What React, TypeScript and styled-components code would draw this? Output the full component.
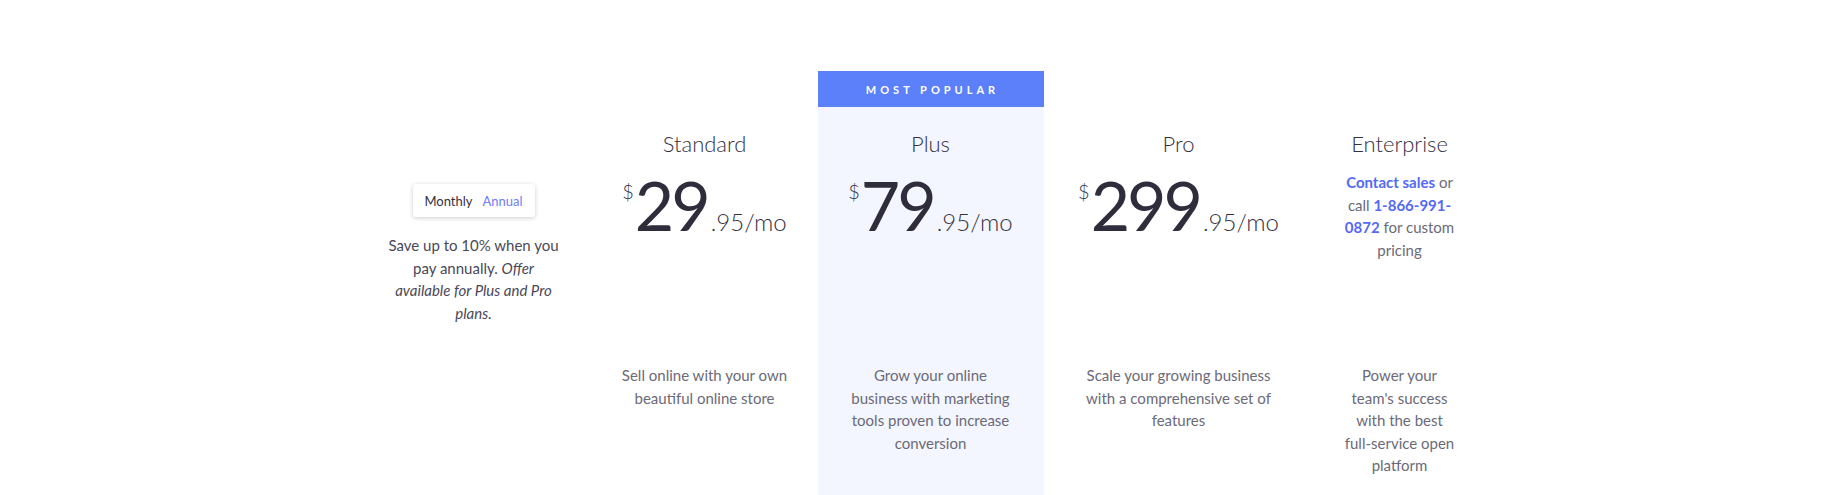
import { styled, createGlobalStyle } from "styled-components";

interface iPlan {
  name: string;
  whole?: string;
  cents?: string;
  blurb: string;
  featured?: boolean;
  contact?: boolean;
}

const plans: iPlan[] = [
  {
    name: "Standard",
    whole: "29",
    cents: ".95",
    blurb: "Sell online with your own beautiful online store",
  },
  {
    name: "Plus",
    whole: "79",
    cents: ".95",
    blurb: "Grow your online business with marketing tools proven to increase conversion",
    featured: true,
  },
  {
    name: "Pro",
    whole: "299",
    cents: ".95",
    blurb: "Scale your growing business with a comprehensive set of features",
  },
  {
    name: "Enterprise",
    blurb: "Power your team's success with the best full-service open platform",
    contact: true,
  },
];

const GlobalStyle = createGlobalStyle`
  html, body {
    margin: 0;
    padding: 0;
    background: #fff;
    overflow: hidden;
  }
  body {
    font-family: Lato, "Open Sans", sans-serif;
    color: #2f2c3b;
  }
`;

const App = () => {
  return (
    <>
      <GlobalStyle />
      <Page>
        <Table>
          <LeftColumn>
            <Toggle>
              <ToggleOption>Monthly</ToggleOption>
              <ToggleOption $active>Annual</ToggleOption>
            </Toggle>
            <SaveNote>
              Save up to 10% when you pay annually.{" "}
              <em>Offer available for Plus and Pro plans.</em>
            </SaveNote>
          </LeftColumn>

          {plans.map((plan) => (
            <Column key={plan.name} $wide={plan.name === "Pro"} $narrow={plan.contact}>
              {plan.featured ? <Badge>Most Popular</Badge> : <BadgeSlot />}
              <Body $featured={plan.featured}>
                <Title>{plan.name}</Title>
                <PriceArea>
                  {plan.contact ? (
                    <Contact>
                      <Link>Contact sales</Link> or call <Link>1-866-991-0872</Link> for custom pricing
                    </Contact>
                  ) : (
                    <Price>
                      <Dollar>$</Dollar>
                      <Whole>{plan.whole}</Whole>
                      <Cents>
                        {plan.cents}/mo
                      </Cents>
                    </Price>
                  )}
                </PriceArea>
                <Blurb>{plan.blurb}</Blurb>
              </Body>
            </Column>
          ))}
        </Table>
      </Page>
    </>
  );
};

export default App;

const Page = styled.div`
  width: 1825px;
  height: 495px;
  box-sizing: border-box;
  padding: 71px 0 0 16px;
  display: flex;
  justify-content: center;
`;
const Table = styled.div`
  display: grid;
  grid-template-columns: 236px auto auto auto auto;
  align-items: stretch;
`;
const LeftColumn = styled.div`
  width: 236px;
  box-sizing: border-box;
  padding: 113px 30px 0;
  display: flex;
  flex-direction: column;
  align-items: center;
`;
const Toggle = styled.div`
  width: 122px;
  height: 33px;
  box-sizing: border-box;
  display: flex;
  align-items: center;
  justify-content: center;
  gap: 10px;
  background: #fff;
  border-radius: 3px;
  box-shadow: 0 1px 4px rgba(30, 30, 60, 0.22);
`;
const ToggleOption = styled.span<{ $active?: boolean }>`
  font-size: 13px;
  color: ${(p) => (p.$active ? "#6f7cf3" : "#34313f")};
  cursor: pointer;
`;
const SaveNote = styled.p`
  margin: 17px 0 0;
  font-size: 15px;
  line-height: 22.5px;
  color: #4a4858;
  text-align: center;

  em {
    font-style: italic;
  }
`;
const Column = styled.div<{ $wide?: boolean; $narrow?: boolean }>`
  width: ${(p) => (p.$wide ? "270px" : p.$narrow ? "172px" : "226px")};
  display: flex;
  flex-direction: column;
`;
const BadgeSlot = styled.div`
  height: 36px;
`;
const Badge = styled.div`
  height: 36px;
  display: flex;
  align-items: center;
  justify-content: center;
  padding-left: 4px;
  background: #5c80fa;
  color: #fff;
  font-size: 11px;
  font-weight: 700;
  letter-spacing: 4px;
  text-transform: uppercase;
`;
const Body = styled.div<{ $featured?: boolean }>`
  flex: 1;
  padding: 0 30px;
  display: flex;
  flex-direction: column;
  align-items: center;
  background: ${(p) => (p.$featured ? "#f3f6fe" : "transparent")};
`;
const Title = styled.h3`
  margin: 23px 0 0;
  height: 28px;
  font-size: 22px;
  line-height: 28px;
  font-weight: 300;
  color: #34313f;
`;
const PriceArea = styled.div`
  margin-top: 13px;
  height: 193px;
  display: flex;
  justify-content: center;
`;
const Price = styled.div`
  display: flex;
  align-items: baseline;
  line-height: 1;
  color: #2f2c3b;
  white-space: nowrap;
`;
const Dollar = styled.span`
  align-self: flex-start;
  margin: 10px 1px 0 0;
  font-size: 20px;
  line-height: 20px;
  font-weight: 300;
  color: #34313f;
`;
const Whole = styled.span`
  font-size: 68px;
  letter-spacing: -3px;
`;
const Cents = styled.span`
  margin-left: 3px;
  font-size: 24px;
  font-weight: 300;
  color: #34313f;
`;
const Contact = styled.p`
  margin: 0;
  font-size: 15px;
  line-height: 22.5px;
  color: #6b6a78;
  text-align: center;
`;
const Link = styled.a`
  color: #5469f5;
  font-weight: 700;
  cursor: pointer;
`;
const Blurb = styled.p`
  margin: 0;
  font-size: 15px;
  line-height: 22.5px;
  color: #6b6a78;
  text-align: center;
`;
